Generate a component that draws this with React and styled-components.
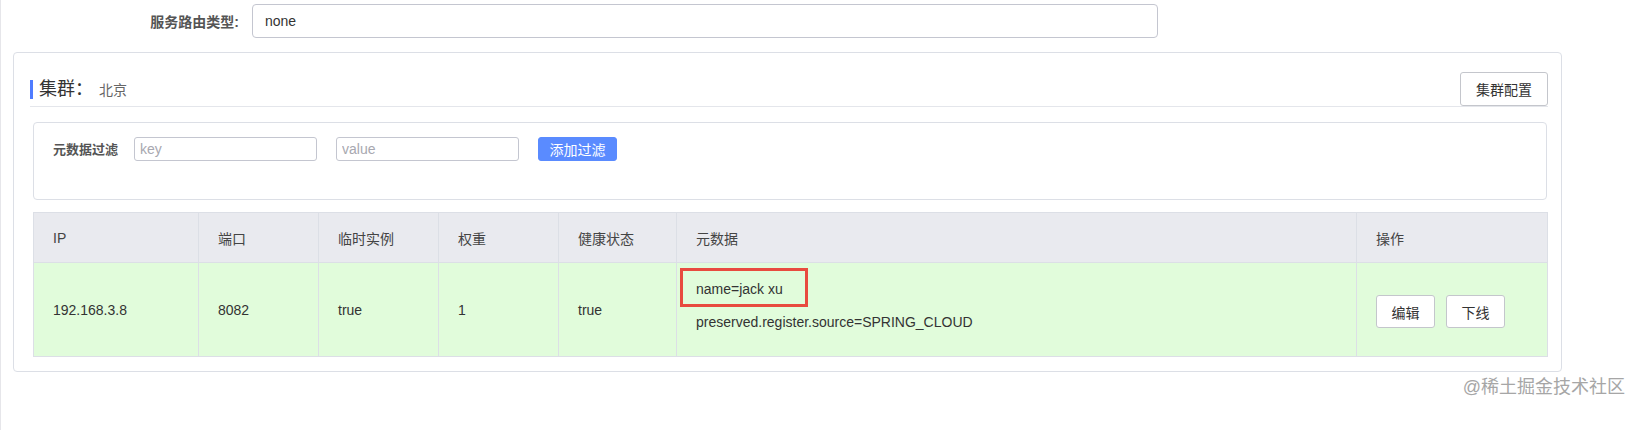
import React from 'react';
import styled, { createGlobalStyle } from 'styled-components';

const GlobalStyle = createGlobalStyle`
  body {
    margin: 0;
    background: #fff;
    font-family: "Liberation Sans", Arial, "Noto Sans CJK SC", sans-serif;
    color: #333;
  }
`;

const Page = styled.div`
  width: 1642px;
  height: 430px;
  box-sizing: border-box;
  border-left: 1px solid #e6e6ea;
  padding-top: 4px;
`;

const FormRow = styled.div`
  display: flex;
  align-items: center;
`;
const FormLabel = styled.label`
  width: 251px;
  box-sizing: border-box;
  padding-right: 13px;
  text-align: right;
  font-size: 14px;
  font-weight: bold;
  color: #555;
`;
const TextInput = styled.input`
  box-sizing: border-box;
  width: ${p => p.$width}px;
  height: ${p => p.$height}px;
  border: 1px solid ${p => p.$border || '#c4c6d0'};
  border-radius: ${p => p.$radius || 4}px;
  padding: 0 ${p => p.$pad || 12}px;
  font-family: inherit;
  font-size: 14px;
  color: #333;
  outline: none;
  background: #fff;
  &::placeholder {
    color: #a8a8b0;
  }
`;

const Card = styled.div`
  margin: 14px 0 0 12px;
  width: 1549px;
  height: 320px;
  box-sizing: border-box;
  border: 1px solid #dcdfe6;
  border-radius: 4px;
  padding: 19px 13px 15px 16px;
`;

const TitleRow = styled.div`
  display: flex;
  align-items: center;
  justify-content: space-between;
  height: 34px;
  border-bottom: 1px solid #e4e6eb;
`;
const Title = styled.div`
  display: flex;
  align-items: baseline;
  border-left: 3px solid #4f7cff;
  padding-left: 6px;
  height: 19px;
  line-height: 19px;
  margin-top: 1px;
`;
const TitleMain = styled.span`
  font-size: 18px;
  color: #333;
  margin-right: 6px;
`;
const TitleSub = styled.span`
  font-size: 14px;
  color: #666;
`;

const Button = styled.button`
  box-sizing: border-box;
  height: ${p => p.$height || 33}px;
  width: ${p => p.$width}px;
  padding: 0;
  border-radius: 3px;
  font-family: inherit;
  font-size: 14px;
  cursor: pointer;
  border: 1px solid ${p => (p.$primary ? '#5a8bff' : '#c4c6cc')};
  background: ${p => (p.$primary ? '#5a8bff' : '#fff')};
  color: ${p => (p.$primary ? '#fff' : '#333')};
`;

const FilterBox = styled.div`
  margin: 15px 1px 0 3px;
  height: 78px;
  box-sizing: border-box;
  border: 1px solid #dcdfe6;
  border-radius: 4px;
  padding: 14px 19px;
  display: flex;
  align-items: flex-start;
`;
const FilterLabel = styled.span`
  font-size: 13px;
  font-weight: bold;
  color: #555;
  line-height: 26px;
  margin-right: 16px;
`;
const FilterGap = styled.div`
  display: flex;
  gap: 19px;
`;

const Table = styled.table`
  margin: 12px 1px 0 3px;
  width: 1514px;
  border-collapse: collapse;
  table-layout: fixed;
  font-size: 14px;
  color: #333;
`;
const Th = styled.th`
  height: 49px;
  background: #e9eaef;
  border: 1px solid #dcdfe6;
  text-align: left;
  font-weight: normal;
  padding: 0 0 0 19px;
  color: #444;
`;
const Td = styled.td`
  position: relative;
  height: 93px;
  background: #e1fcdb;
  border: 1px solid #dcdfe6;
  padding: 0 0 0 19px;
  vertical-align: middle;
`;
const MetaLine = styled.div`
  line-height: 33px;
`;
const MetaBlock = styled.div`
  padding-bottom: 7px;
`;
const Highlight = styled.div`
  position: absolute;
  left: 3px;
  top: 5px;
  width: 128px;
  height: 39px;
  box-sizing: border-box;
  border: 3px solid #e84b3f;
`;
const Actions = styled.div`
  display: flex;
  gap: 11px;
  margin-top: 4px;
`;

const Watermark = styled.div`
  text-align: right;
  padding-right: 17px;
  margin-top: 0;
  font-size: 18px;
  color: #a6a6a6;
  text-shadow: 0 0 1px #fff;
`;

const columns = [
  { title: 'IP', width: 165 },
  { title: '端口', width: 120 },
  { title: '临时实例', width: 120 },
  { title: '权重', width: 120 },
  { title: '健康状态', width: 118 },
  { title: '元数据', width: 680 },
  { title: '操作', width: 191 },
];

const instance = {
  ip: '192.168.3.8',
  port: '8082',
  ephemeral: 'true',
  weight: '1',
  healthy: 'true',
  metadata: ['name=jack xu', 'preserved.register.source=SPRING_CLOUD'],
};

const App = () => {
  return (
    <>
      <GlobalStyle />
      <Page>
        <FormRow>
          <FormLabel>服务路由类型:</FormLabel>
          <TextInput $width={906} $height={34} defaultValue='none' />
        </FormRow>

        <Card>
          <TitleRow>
            <Title>
              <TitleMain>集群：</TitleMain>
              <TitleSub>北京</TitleSub>
            </Title>
            <Button $width={88} $height={34}>集群配置</Button>
          </TitleRow>

          <FilterBox>
            <FilterLabel>元数据过滤</FilterLabel>
            <FilterGap>
              <TextInput $width={183} $height={24} $pad={5} $radius={3} placeholder='key' />
              <TextInput $width={183} $height={24} $pad={5} $radius={3} placeholder='value' />
              <Button $primary $width={79} $height={24}>添加过滤</Button>
            </FilterGap>
          </FilterBox>

          <Table>
            <colgroup>
              {columns.map(c => <col key={c.title} style={{ width: c.width }} />)}
            </colgroup>
            <thead>
              <tr>
                {columns.map(c => <Th key={c.title}>{c.title}</Th>)}
              </tr>
            </thead>
            <tbody>
              <tr>
                <Td>{instance.ip}</Td>
                <Td>{instance.port}</Td>
                <Td>{instance.ephemeral}</Td>
                <Td>{instance.weight}</Td>
                <Td>{instance.healthy}</Td>
                <Td>
                  <Highlight />
                  <MetaBlock>
                    {instance.metadata.map(m => <MetaLine key={m}>{m}</MetaLine>)}
                  </MetaBlock>
                </Td>
                <Td>
                  <Actions>
                    <Button $width={59}>编辑</Button>
                    <Button $width={59}>下线</Button>
                  </Actions>
                </Td>
              </tr>
            </tbody>
          </Table>
        </Card>
        <Watermark>@稀土掘金技术社区</Watermark>
      </Page>
    </>
  );
};

export default App;
